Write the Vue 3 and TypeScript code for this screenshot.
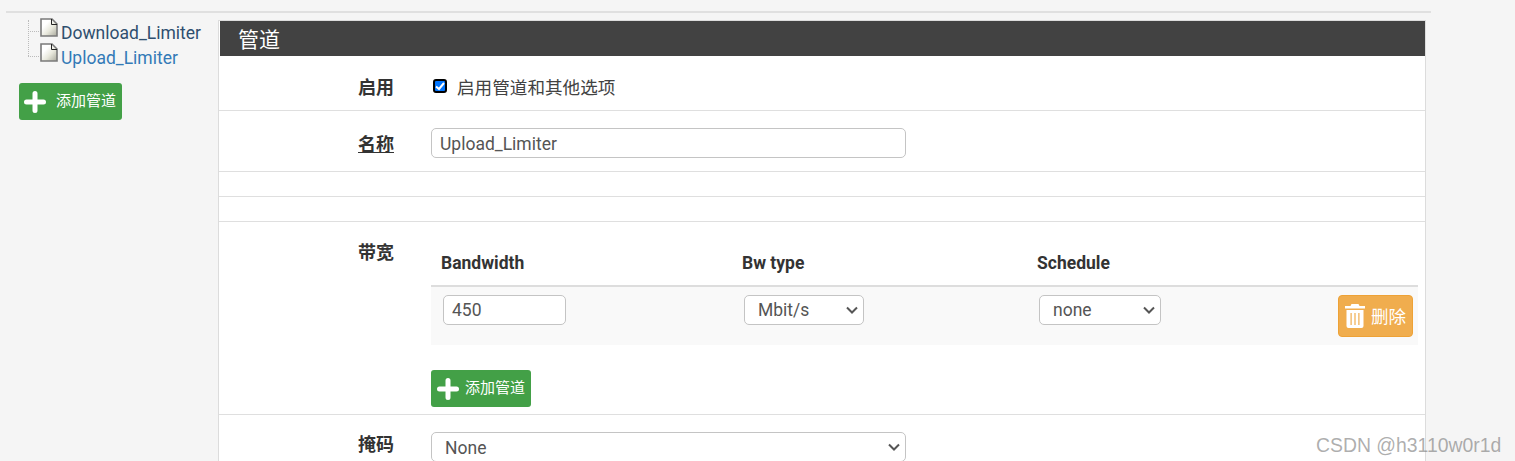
<script setup lang="ts">
const files = [
  { name: 'Download_Limiter', cls: 'dark' },
  { name: 'Upload_Limiter', cls: 'blue' },
]
</script>

<template>
  <div class="page">
    <div class="rule"></div>
    <div class="cols">
      <aside class="side">
        <ul class="tree">
          <li v-for="f in files" :key="f.name" class="node">
            <svg class="doc" width="18" height="19" viewBox="0 0 18 19">
              <defs>
                <linearGradient id="g" x1="0" y1="0" x2="1" y2="1">
                  <stop offset="0.3" stop-color="#ffffff" />
                  <stop offset="0.6" stop-color="#e8e8dc" />
                  <stop offset="1" stop-color="#a8a89c" />
                </linearGradient>
              </defs>
              <path d="M1 1H12L17 6V18H1Z" fill="url(#g)" stroke="#7a7a7a" stroke-width="1.6" />
              <path d="M11.500 1V6.500H17" fill="none" stroke="#222" stroke-width="1" />
            </svg>
            <a :class="f.cls">{{ f.name }}</a>
          </li>
        </ul>
        <button class="btn green side-btn">
          <svg class="plus" width="22" height="22" viewBox="0 0 22 22"><path d="M11 2.500V19.500M2.500 11H19.500" stroke="#fff" stroke-width="5" stroke-linecap="round" /></svg>
          <span>添加管道</span>
        </button>
      </aside>
      <main class="panel">
        <h2 class="head">管道</h2>
        <section class="row enable">
          <label class="lbl">启用</label>
          <div class="val check">
            <input type="checkbox" checked class="cb" />
            <span>启用管道和其他选项</span>
          </div>
        </section>
        <section class="row name">
          <label class="lbl u">名称</label>
          <div class="val"><input class="ctl wide" value="Upload_Limiter" /></div>
        </section>
        <section class="row blank"></section>
        <section class="row blank"></section>
        <section class="row bw">
          <label class="lbl top">带宽</label>
          <div class="val tblwrap">
            <div class="thead">
              <span class="c1">Bandwidth</span>
              <span class="c2">Bw type</span>
              <span class="c3">Schedule</span>
            </div>
            <div class="tbody">
              <div class="c1"><input class="ctl num" value="450" /></div>
              <div class="c2"><select class="ctl s1"><option>Mbit/s</option></select></div>
              <div class="c3"><select class="ctl s2"><option>none</option></select></div>
              <button class="btn orange">
                <svg width="22" height="24" viewBox="0 0 22 24"><path fill="#fff" fill-rule="evenodd" d="M7.500 0h7l1 2h5.500v2.500H1V2h5.500ZM2.500 6h17v16a2 2 0 0 1-2 2h-13a2 2 0 0 1-2-2ZM6.500 9v12h1.200V9ZM10.400 9v12h1.200V9ZM14.300 9v12h1.200V9Z" /></svg>
                <span>删除</span>
              </button>
            </div>
            <button class="btn green add">
              <svg class="plus" width="22" height="22" viewBox="0 0 22 22"><path d="M11 2.500V19.500M2.500 11H19.500" stroke="#fff" stroke-width="5" stroke-linecap="round" /></svg>
              <span>添加管道</span>
            </button>
          </div>
        </section>
        <section class="row mask">
          <label class="lbl">掩码</label>
          <div class="val"><select class="ctl wide sel"><option>None</option></select></div>
        </section>
      </main>
    </div>
    <div class="mark">CSDN @h3110w0r1d</div>
  </div>
</template>

<style>
html, body { margin: 0; background: #f5f5f5; overflow: hidden; }
</style>

<style scoped>
.page {
  position: relative;
  width: 1515px;
  height: 461px;
  overflow: hidden;
  box-sizing: border-box;
  padding: 11px 0 0 6px;
  font-family: Roboto, "Noto Sans CJK SC", sans-serif;
  font-size: 17.5px;
  color: #424242;
}
.rule { width: 1425px; height: 2px; background: #e0e0e0; margin-bottom: 7px; }
.cols { display: flex; align-items: flex-start; }
.side { width: 212px; flex: none; padding: 0 0 0 13px; box-sizing: border-box; }
.tree {
  list-style: none;
  margin: 0 0 13px;
  padding: 0 0 0 21px;
  position: relative;
  height: 50px;
}
.tree::before {
  content: "";
  position: absolute;
  left: 9px;
  top: 0;
  width: 10px;
  height: 36px;
  border-left: 1px dotted #bbb;
}
.node { height: 25px; display: flex; align-items: flex-start; position: relative; }
.node::before {
  content: "";
  position: absolute;
  left: -12px;
  top: 11px;
  width: 11px;
  border-top: 1px dotted #bbb;
}
.doc { flex: none; margin-top: -2px; }
.node a { margin: 2px 0 0 3px; line-height: 22px; }
.dark { color: #2f4f6f; }
.blue { color: #337ab7; }
.btn {
  display: inline-flex;
  align-items: center;
  border: 1px solid transparent;
  border-radius: 3px;
  color: #fff;
  font-family: inherit;
  padding: 0;
  box-sizing: border-box;
}
.btn span { position: relative; top: -2px; }
.green { background: #43a047; height: 37px; font-size: 15px; }
.side-btn { width: 103px; padding-left: 4px; gap: 10px; }
.add { width: 100px; padding-left: 5px; gap: 6px; }
.panel {
  width: 1208px;
  flex: none;
  background: #fff;
  border: 1px solid #dcdcdc;
  box-sizing: border-box;
}
.head {
  margin: 0 0 0 1px;
  height: 35px;
  background: #424242;
  color: #fff;
  font-weight: 400;
  font-size: 21px;
  line-height: 38px;
  padding-left: 18px;
  overflow: hidden;
}
.row { display: flex; border-bottom: 1px solid #dfdfdf; }
.lbl {
  width: 175px;
  flex: none;
  text-align: right;
  font-weight: 700;
  font-size: 18px;
  color: #333;
  padding-right: 37px;
}
.u { text-decoration: underline; }
.enable { height: 54px; align-items: center; }
.enable .lbl { margin-top: 6px; }
.check { display: flex; align-items: center; font-size: 17.6px; margin-top: 6px; }
.cb {
  appearance: none;
  margin: 0 10px 0 2px;
  width: 14px;
  height: 14px;
  box-sizing: border-box;
  border: 2px solid #000;
  border-radius: 3px;
  background: #0075ff url("data:image/svg+xml,%3Csvg xmlns='http://www.w3.org/2000/svg' width='10' height='10' viewBox='0 0 10 10'%3E%3Cpath d='M1 5.500L4 8L9 2' fill='none' stroke='%23fff' stroke-width='2'/%3E%3C/svg%3E") no-repeat center;
}
.name { height: 60px; align-items: center; }
.name .lbl, .name .val { margin-top: 4px; }
.blank { height: 24px; }
.ctl {
  font-family: inherit;
  font-size: 17.5px;
  color: #555;
  background: #fff;
  border: 1px solid #c4c4c4;
  border-radius: 5px;
  height: 30px;
  box-sizing: border-box;
  outline: none;
}
input.ctl { padding: 1px 8px 0; }
select.ctl {
  appearance: none;
  padding-top: 1px;
  background: #fff url("data:image/svg+xml,%3Csvg xmlns='http://www.w3.org/2000/svg' width='12' height='8' viewBox='0 0 12 8'%3E%3Cpath d='M1 1.500L6 6.500L11 1.500' fill='none' stroke='%23555' stroke-width='2'/%3E%3C/svg%3E") no-repeat right 5px center;
}
.wide { width: 475px; display: block; }
.bw { height: 192px; }
.bw .top { margin-top: 20px; line-height: 22px; }
.tblwrap { width: 987px; }
.thead {
  height: 65px;
  box-sizing: border-box;
  border-bottom: 2px solid #ddd;
  display: flex;
  font-weight: 700;
  font-size: 17.5px;
  color: #333;
  padding-top: 30px;
  line-height: 22px;
}
.c1 { width: 311px; box-sizing: border-box; flex: none; }
.c2 { width: 295px; flex: none; }
.thead .c1 { padding-left: 10px; width: 311px; }
.tbody {
  position: relative;
  height: 58px;
  background: #f9f9f9;
  display: flex;
  padding-top: 8px;
  box-sizing: border-box;
}
.tbody .c1 { padding-left: 12px; width: 313px; }
.tbody input.ctl { padding-top: 0; }
.tbody select.ctl { padding-top: 0; }
.num { width: 123px; }
.s1 { width: 120px; padding-left: 13px; }
.s2 { width: 122px; padding-left: 13px; }
.orange {
  position: absolute;
  left: 907px;
  top: 8px;
  width: 75px;
  height: 42px;
  background: #f0ad4e;
  border-color: #eea236;
  border-radius: 4px;
  font-size: 17.5px;
  padding-left: 5px;
  gap: 5px;
}
.orange span { top: -1px; }
.add { margin-top: 25px; }
.mask { border-bottom: 0; padding-top: 17px; height: 40px; }
.mask .lbl { line-height: 26px; }
.sel { padding-left: 13px; }
.mark {
  position: absolute;
  left: 1316px;
  top: 433px;
  font-family: "Liberation Sans", sans-serif;
  font-size: 19.4px;
  line-height: 24px;
  color: rgba(120, 120, 120, 0.6);
}
</style>
